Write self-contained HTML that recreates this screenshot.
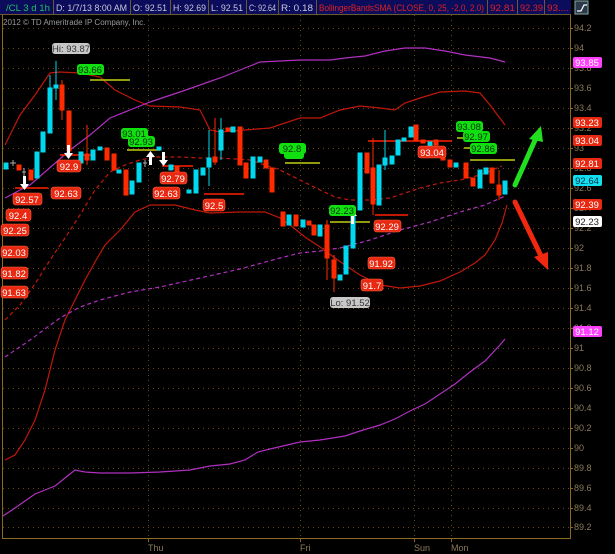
<!DOCTYPE html>
<html><head><meta charset="utf-8"><style>
html,body{margin:0;padding:0;background:#000;width:615px;height:554px;overflow:hidden;font-family:"Liberation Sans",sans-serif}
</style></head><body>
<svg width="615" height="554" viewBox="0 0 615 554" xmlns="http://www.w3.org/2000/svg" font-family="Liberation Sans, sans-serif">
<rect width="615" height="554" fill="#000"/>
<!-- top bar -->
<rect x="0" y="0" width="571" height="15" fill="#0c0c5c"/>
<g stroke="#6a5a30" stroke-width="1">
<line x1="53.5" y1="0" x2="53.5" y2="15"/><line x1="130.5" y1="0" x2="130.5" y2="15"/><line x1="170.5" y1="0" x2="170.5" y2="15"/><line x1="208.5" y1="0" x2="208.5" y2="15"/><line x1="246.5" y1="0" x2="246.5" y2="15"/><line x1="278.5" y1="0" x2="278.5" y2="15"/><line x1="316.5" y1="0" x2="316.5" y2="15"/><line x1="487.5" y1="0" x2="487.5" y2="15"/><line x1="517.5" y1="0" x2="517.5" y2="15"/><line x1="544.5" y1="0" x2="544.5" y2="15"/>
<line x1="0" y1="14.5" x2="571" y2="14.5"/>
</g>
<g font-size="9" fill="#c8c8d8" lengthAdjust="spacingAndGlyphs">
<text x="6" y="11" fill="#20c060" textLength="44" lengthAdjust="spacingAndGlyphs">/CL 3 d 1h</text>
<text x="56" y="11" textLength="71" lengthAdjust="spacingAndGlyphs">D: 1/7/13 8:00 AM</text>
<text x="133" y="11" textLength="34" lengthAdjust="spacingAndGlyphs">O: 92.51</text>
<text x="173" y="11" textLength="33" lengthAdjust="spacingAndGlyphs">H: 92.69</text>
<text x="211" y="11" textLength="32" lengthAdjust="spacingAndGlyphs">L: 92.51</text>
<text x="249" y="11" textLength="27" lengthAdjust="spacingAndGlyphs">C: 92.64</text>
<text x="281" y="11" textLength="32" lengthAdjust="spacingAndGlyphs">R: 0.18</text>
<text x="319" y="11" fill="#e02020" textLength="165" lengthAdjust="spacingAndGlyphs">BollingerBandsSMA (CLOSE, 0, 25, -2.0, 2.0)</text>
<text x="490" y="11" fill="#e02020" textLength="25" lengthAdjust="spacingAndGlyphs">92.81</text>
<text x="520" y="11" fill="#e02020" textLength="23" lengthAdjust="spacingAndGlyphs">92.39</text>
<text x="547" y="11" fill="#e02020" textLength="22" lengthAdjust="spacingAndGlyphs">93....</text>
</g>
<rect x="575" y="1" width="13" height="13" fill="#2a3a4a" stroke="#8aa" stroke-width="1"/>
<path d="M577 11 L581 11 L584 5 L587 5" stroke="#fff" fill="none" stroke-width="1.2"/>
<text x="3" y="25" font-size="8" fill="#9a9a9a">2012 © TD Ameritrade IP Company, Inc.</text>
<!-- frame -->
<line x1="2.5" y1="15" x2="2.5" y2="538" stroke="#8a6a20"/>
<line x1="570.5" y1="15" x2="570.5" y2="538" stroke="#8a6a20"/>
<line x1="2" y1="538.5" x2="571" y2="538.5" stroke="#8a6a20"/>
<!-- grid -->
<g stroke="#6a4a18" stroke-dasharray="1,4" stroke-width="1">
<line x1="3" x2="570" y1="28.5" y2="28.5"/><line x1="3" x2="570" y1="48.5" y2="48.5"/><line x1="3" x2="570" y1="68.5" y2="68.5"/><line x1="3" x2="570" y1="88.5" y2="88.5"/><line x1="3" x2="570" y1="108.5" y2="108.5"/><line x1="3" x2="570" y1="128.5" y2="128.5"/><line x1="3" x2="570" y1="148.5" y2="148.5"/><line x1="3" x2="570" y1="168.5" y2="168.5"/><line x1="3" x2="570" y1="188.5" y2="188.5"/><line x1="3" x2="570" y1="208.5" y2="208.5"/><line x1="3" x2="570" y1="228.5" y2="228.5"/><line x1="3" x2="570" y1="248.5" y2="248.5"/><line x1="3" x2="570" y1="268.5" y2="268.5"/><line x1="3" x2="570" y1="288.5" y2="288.5"/><line x1="3" x2="570" y1="308.5" y2="308.5"/><line x1="3" x2="570" y1="328.5" y2="328.5"/><line x1="3" x2="570" y1="348.5" y2="348.5"/><line x1="3" x2="570" y1="368.5" y2="368.5"/><line x1="3" x2="570" y1="388.5" y2="388.5"/><line x1="3" x2="570" y1="408.5" y2="408.5"/><line x1="3" x2="570" y1="428.5" y2="428.5"/><line x1="3" x2="570" y1="448.5" y2="448.5"/><line x1="3" x2="570" y1="468.5" y2="468.5"/><line x1="3" x2="570" y1="488.5" y2="488.5"/><line x1="3" x2="570" y1="508.5" y2="508.5"/><line x1="3" x2="570" y1="527.5" y2="527.5"/>
<line x1="148.5" x2="148.5" y1="15" y2="538"/><line x1="300.5" x2="300.5" y1="15" y2="538"/><line x1="414.5" x2="414.5" y1="15" y2="538"/><line x1="451.5" x2="451.5" y1="15" y2="538"/>
</g>
<g stroke="#8a6a20"><line x1="148.5" x2="148.5" y1="538" y2="542"/><line x1="300.5" x2="300.5" y1="538" y2="542"/><line x1="414.5" x2="414.5" y1="538" y2="542"/><line x1="451.5" x2="451.5" y1="538" y2="542"/></g>
<g font-size="9" fill="#8a7a5a">
<text x="148" y="551">Thu</text><text x="300" y="551">Fri</text><text x="414" y="551">Sun</text><text x="451" y="551">Mon</text>
</g>
<g font-size="9" fill="#8a7a5a">
<text x="574" y="31">94.2</text><text x="574" y="51">94</text><text x="574" y="71">93.8</text><text x="574" y="91">93.6</text><text x="574" y="111">93.4</text><text x="574" y="131">93.2</text><text x="574" y="151">93</text><text x="574" y="171">92.8</text><text x="574" y="191">92.6</text><text x="574" y="211">92.4</text><text x="574" y="231">92.2</text><text x="574" y="251">92</text><text x="574" y="271">91.8</text><text x="574" y="291">91.6</text><text x="574" y="311">91.4</text><text x="574" y="331">91.2</text><text x="574" y="351">91</text><text x="574" y="371">90.8</text><text x="574" y="391">90.6</text><text x="574" y="411">90.4</text><text x="574" y="431">90.2</text><text x="574" y="451">90</text><text x="574" y="471">89.8</text><text x="574" y="491">89.6</text><text x="574" y="511">89.4</text><text x="574" y="530">89.2</text>
</g>
<g stroke="#8a6a20"><path d="M570 28.5h3M570 48.5h3M570 68.5h3M570 88.5h3M570 108.5h3M570 128.5h3M570 148.5h3M570 168.5h3M570 188.5h3M570 208.5h3M570 228.5h3M570 248.5h3M570 268.5h3M570 288.5h3M570 308.5h3M570 328.5h3M570 348.5h3M570 368.5h3M570 388.5h3M570 408.5h3M570 428.5h3M570 448.5h3M570 468.5h3M570 488.5h3M570 508.5h3M570 527.5h3"/></g>
<!-- bands -->
<g fill="none" stroke-width="1.2">
<polyline stroke="#c01808" points="5,145 20,115 35,95 50,73 60,72 80,73 100,77 115,90 135,100 150,106 180,107 200,110 210,130 220,132 245,130 270,128 300,118 320,118 340,110 360,106 380,108 395,110 405,103 420,98 440,92 465,91 480,93 490,105 505,125"/>
<polyline stroke="#c01808" points="5,460 15,455 25,440 35,420 45,390 55,350 65,320 75,300 85,280 95,262 105,245 120,230 135,212 150,205 175,205 195,210 210,213 240,212 265,212 280,218 290,225 305,237 320,247 335,258 345,265 360,275 380,285 400,288 420,286 440,281 460,272 475,263 485,255 495,240 502,223 507,205"/>
<polyline stroke="#c01808" stroke-dasharray="4,3" points="5,320 20,305 35,284 50,260 65,238 80,215 95,190 110,172 125,165 140,160 155,157 180,157 200,158 220,158 250,160 265,165 280,170 300,180 320,190 335,197 350,200 370,200 390,198 405,193 420,188 440,183 460,180 480,175 502,166"/>
<polyline stroke="#b030c0" points="5,198 20,190 30,185 45,172 70,150 90,135 110,118 130,110 150,102 180,92 200,85 220,78 240,70 260,62 280,61 300,60 330,60 345,58 365,56 385,51 405,48 425,48 445,51 465,55 490,58 505,62"/>
<polyline stroke="#b030c0" stroke-dasharray="4,3" points="5,357 30,340 60,318 80,307 100,300 130,292 160,287 200,278 240,269 280,258 300,253 320,251 340,248 370,240 400,230 430,222 460,212 485,205 505,196"/>
<polyline stroke="#b030c0" points="3,516 15,508 25,501 35,494 45,490 55,486 65,478 75,470 85,472 100,473 130,473 160,472 190,470 210,466 230,464 245,460 258,452 270,449 300,442 320,440 345,436 360,431 380,425 395,419 410,411 425,404 440,394 455,384 470,372 485,361 500,345 505,339"/>
</g>
<!-- level lines -->
<g stroke-width="1.5">
<line x1="90" y1="80" x2="130" y2="80" stroke="#c0d010"/>
<line x1="127" y1="150" x2="160" y2="150" stroke="#c0d010"/>
<line x1="285" y1="163" x2="320" y2="163" stroke="#c0d010"/>
<line x1="330" y1="222" x2="370" y2="222" stroke="#c0d010"/>
<line x1="470" y1="160" x2="515" y2="160" stroke="#c0d010"/>
<line x1="457" y1="138" x2="463" y2="138" stroke="#c0d010"/>
<line x1="464" y1="148" x2="470" y2="148" stroke="#c0d010"/>
<line x1="15" y1="188" x2="48" y2="188" stroke="#ff2000"/>
<line x1="60" y1="155" x2="92" y2="155" stroke="#ff2000"/>
<line x1="162" y1="166" x2="193" y2="166" stroke="#ff2000"/>
<line x1="204" y1="194" x2="244" y2="194" stroke="#ff2000"/>
<line x1="375" y1="215" x2="408" y2="215" stroke="#ff2000"/>
<line x1="368" y1="141" x2="452" y2="141" stroke="#ff2000"/>
</g>
<!-- candles -->
<g stroke-width="1">
<g fill="#00d8f0" stroke="#00d8f0">
<rect x="4" y="163" width="4" height="6"/><rect x="35" y="152" width="4" height="26"/><rect x="41" y="132" width="4" height="20"/><rect x="48" y="88" width="4" height="45"/><line x1="50" y1="75" x2="50" y2="88"/><rect x="54" y="85" width="4" height="3"/><line x1="56" y1="61" x2="56" y2="100"/>
<rect x="79" y="152" width="4" height="11"/><rect x="91" y="150" width="4" height="10"/><rect x="98" y="147" width="4" height="3"/><rect x="117" y="170" width="4" height="3"/><rect x="130" y="181" width="4" height="13"/><rect x="137" y="163" width="4" height="19"/><rect x="157" y="147" width="4" height="3"/><rect x="169" y="165" width="4" height="5"/><rect x="187" y="190" width="4" height="3"/><rect x="194" y="170" width="4" height="23"/><rect x="201" y="168" width="4" height="7"/><rect x="207" y="158" width="4" height="9"/><line x1="209" y1="130" x2="209" y2="186"/><rect x="219" y="130" width="4" height="20"/><line x1="221" y1="118" x2="221" y2="160"/><rect x="231" y="127" width="4" height="5"/><rect x="251" y="157" width="4" height="21"/><rect x="258" y="157" width="4" height="5"/>
<rect x="287" y="215" width="4" height="10"/><rect x="301" y="220" width="4" height="7"/><rect x="318" y="225" width="4" height="11"/><rect x="338" y="275" width="4" height="5"/><rect x="344" y="246" width="4" height="28"/><rect x="351" y="215" width="4" height="33"/><rect x="358" y="153" width="4" height="57"/><rect x="377" y="165" width="4" height="40"/><rect x="383" y="158" width="4" height="7"/><line x1="385" y1="130" x2="385" y2="170"/><rect x="390" y="156" width="4" height="8"/><rect x="396" y="140" width="4" height="15"/><rect x="402" y="138" width="4" height="3"/><rect x="409" y="127" width="4" height="10"/><rect x="428" y="142" width="4" height="8"/><rect x="454" y="163" width="4" height="4"/><rect x="478" y="170" width="4" height="18"/><rect x="484" y="168" width="4" height="6"/><rect x="503" y="181" width="4" height="13"/>
</g>
<g fill="#ff2a00" stroke="#ff2a00">
<rect x="17" y="165" width="4" height="5"/><rect x="29" y="170" width="4" height="10"/><rect x="60" y="85" width="4" height="25"/><line x1="62" y1="80" x2="62" y2="120"/><rect x="67" y="111" width="4" height="40"/><rect x="85" y="154" width="4" height="6"/><line x1="87" y1="125" x2="87" y2="165"/><rect x="105" y="148" width="4" height="12"/><rect x="112" y="154" width="4" height="16"/><rect x="124" y="170" width="4" height="25"/><rect x="175" y="166" width="4" height="12"/><rect x="213" y="157" width="4" height="5"/><line x1="215" y1="118" x2="215" y2="165"/><rect x="226" y="128" width="4" height="3"/><rect x="238" y="127" width="4" height="38"/><rect x="244" y="163" width="4" height="15"/><rect x="264" y="160" width="4" height="8"/><rect x="270" y="168" width="4" height="24"/><rect x="281" y="212" width="4" height="14"/><rect x="294" y="215" width="4" height="11"/>
<rect x="307" y="221" width="4" height="4"/><rect x="312" y="225" width="4" height="10"/><rect x="325" y="225" width="4" height="33"/><line x1="327" y1="220" x2="327" y2="280"/><rect x="332" y="260" width="4" height="18"/><line x1="334" y1="255" x2="334" y2="292"/><rect x="365" y="153" width="4" height="20"/><rect x="371" y="168" width="4" height="36"/><line x1="373" y1="138" x2="373" y2="215"/><rect x="414" y="125" width="4" height="15"/><rect x="421" y="140" width="4" height="3"/><rect x="434" y="140" width="4" height="5"/><rect x="441" y="152" width="4" height="8"/><rect x="448" y="160" width="4" height="7"/><rect x="464" y="163" width="4" height="15"/><rect x="471" y="178" width="4" height="8"/><rect x="490" y="168" width="4" height="15"/><rect x="497" y="185" width="4" height="10"/><line x1="499" y1="170" x2="499" y2="200"/>
</g>
<g stroke="#aaa"><line x1="13" y1="160" x2="13" y2="166"/><line x1="10" y1="163" x2="16" y2="163"/><line x1="24" y1="168" x2="24" y2="176"/><line x1="22" y1="172" x2="26" y2="172"/><line x1="145" y1="160" x2="145" y2="167"/><line x1="143" y1="163" x2="147" y2="163"/></g>
</g>
<!-- white arrows -->
<g fill="#fff">
<path d="M23 176h3v8h3l-4.5 6-4.5-6h3z"/><path d="M67 145h3v8h3l-4.5 6-4.5-6h3z"/><path d="M162 152h3v8h3l-4.5 6-4.5-6h3z"/><path d="M149 165h3v-8h3l-4.5-6-4.5 6h3z"/><path d="M351 224h3v-8h3l-4.5-6-4.5 6h3z"/>
</g>
<!-- chart labels -->
<g font-size="9.5" text-anchor="middle">
<g fill="#e82810" stroke="#ff6040" stroke-width="0.6">
<rect x="57" y="160" width="24" height="12" rx="3"/><rect x="51" y="187" width="30" height="12" rx="3"/><rect x="13" y="193" width="29" height="12" rx="3"/><rect x="6" y="209" width="25" height="12" rx="3"/><rect x="1" y="224" width="28" height="12" rx="3"/><rect x="1" y="246" width="27" height="12" rx="3"/><rect x="1" y="267" width="27" height="12" rx="3"/><rect x="1" y="286" width="27" height="12" rx="3"/><rect x="160" y="172" width="27" height="12" rx="3"/><rect x="153" y="187" width="27" height="12" rx="3"/><rect x="203" y="199" width="22" height="12" rx="3"/><rect x="374" y="220" width="27" height="12" rx="3"/><rect x="368" y="257" width="27" height="12" rx="3"/><rect x="361" y="279" width="22" height="12" rx="3"/><rect x="418" y="146" width="28" height="12" rx="3"/>
</g>
<g fill="#fff">
<text x="69" y="170">92.9</text><text x="66" y="197">92.63</text><text x="27" y="203">92.57</text><text x="18" y="219">92.4</text><text x="15" y="234">92.25</text><text x="14" y="256">92.03</text><text x="14" y="277">91.82</text><text x="14" y="296">91.63</text><text x="173" y="182">92.79</text><text x="166" y="197">92.63</text><text x="214" y="209">92.5</text><text x="387" y="230">92.29</text><text x="381" y="267">91.92</text><text x="372" y="289">91.7</text><text x="432" y="156">93.04</text>
</g>
<g fill="#10e010">
<rect x="77" y="64" width="27" height="11" rx="3"/><rect x="121" y="128" width="27" height="11" rx="3"/><rect x="128" y="136" width="27" height="11" rx="3"/><rect x="279" y="143" width="27" height="11" rx="3"/><rect x="284" y="150" width="20" height="9" rx="3"/><rect x="329" y="205" width="27" height="11" rx="3"/><rect x="456" y="121" width="27" height="11" rx="3"/><rect x="463" y="131" width="27" height="11" rx="3"/><rect x="470" y="143" width="27" height="11" rx="3"/>
</g>
<g fill="#083008">
<text x="90" y="73">93.66</text><text x="134" y="137">93.01</text><text x="141" y="145">92.93</text><text x="292" y="152">92.8</text><text x="342" y="214">92.23</text><text x="469" y="130">93.08</text><text x="476" y="140">92.97</text><text x="483" y="152">92.86</text>
</g>
<rect x="52" y="43" width="38" height="11" rx="3" fill="#c8c8c8"/><text x="71" y="52" fill="#333">Hi: 93.87</text>
<rect x="330" y="297" width="40" height="11" rx="3" fill="#c8c8c8"/><text x="350" y="306" fill="#333">Lo: 91.52</text>
</g>
<!-- axis flags -->
<g font-size="9.5" text-anchor="middle">
<rect x="573" y="57" width="29" height="11" rx="2" fill="#ff40ff"/><text x="587" y="66" fill="#fff">93.85</text>
<rect x="573" y="117" width="29" height="11" rx="2" fill="#e82810"/><text x="587" y="126" fill="#fff">93.23</text>
<rect x="573" y="135" width="29" height="11" rx="2" fill="#e82810"/><text x="587" y="144" fill="#fff">93.04</text>
<rect x="573" y="158" width="29" height="11" rx="2" fill="#e82810"/><text x="587" y="167" fill="#fff">92.81</text>
<rect x="573" y="175" width="29" height="11" rx="2" fill="#10e0f0"/><text x="587" y="184" fill="#003040">92.64</text>
<rect x="573" y="199" width="29" height="11" rx="2" fill="#e82810"/><text x="587" y="208" fill="#fff">92.39</text>
<rect x="573" y="216" width="29" height="11" rx="2" fill="#fff"/><text x="587" y="225" fill="#222">92.23</text>
<rect x="573" y="326" width="29" height="11" rx="2" fill="#ff40ff"/><text x="587" y="335" fill="#fff">91.12</text>
</g>
<!-- big arrows -->
<g stroke-linecap="round">
<line x1="515" y1="185" x2="536" y2="138" stroke="#20e020" stroke-width="5"/>
<path d="M541 126 L529 139 L543 142 Z" fill="#20e020"/>
<line x1="515" y1="202" x2="542" y2="258" stroke="#f02810" stroke-width="5"/>
<path d="M548 270 L534 257 L548 252 Z" fill="#f02810"/>
</g>
</svg>
</body></html>
